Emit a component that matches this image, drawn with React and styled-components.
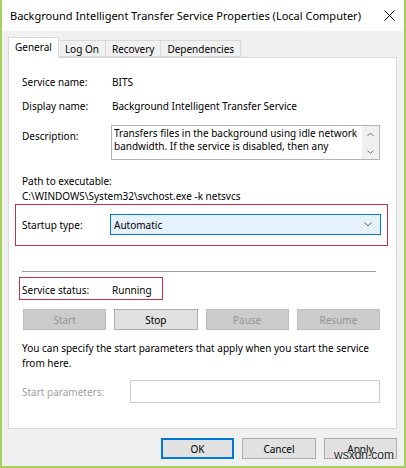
import React from 'react';
import styled, { createGlobalStyle } from 'styled-components';

const Global = createGlobalStyle`
  html, body { margin: 0; padding: 0; background: #fff; }
  body { font-family: "Noto Sans", "Liberation Sans", sans-serif; font-size: 10px; color: #000; }
  * { box-sizing: border-box; }
`;

const Window = styled.div`
  position: relative;
  width: 406px;
  height: 468px;
  background: #f0f0f0;
  border: 2px solid #a3d15c;
  border-top: 0;
  display: flex;
  flex-direction: column;
`;

const TitleBar = styled.div`
  height: 31px;
  background: #fff;
  display: flex;
  align-items: center;
  justify-content: space-between;
  padding: 0 9px 1px 8px;
  font-size: 11px;
`;

const Tabs = styled.div`
  display: flex;
  align-items: flex-end;
  margin: 6px 0 0 6px;
  position: relative;
  z-index: 1;
`;

const Tab = styled.div`
  height: ${(p) => (p.$active ? '21px' : '17px')};
  padding: 0 6px;
  display: flex;
  align-items: center;
  line-height: 16px;
  background: ${(p) => (p.$active ? '#fff' : '#f0f0f0')};
  border: 1px solid #d9d9d9;
  border-bottom: ${(p) => (p.$active ? '0' : '1px solid #d9d9d9')};
  border-left: ${(p) => (p.$first || p.$active ? '1px solid #d9d9d9' : '0')};
  margin-bottom: ${(p) => (p.$active ? '-1px' : '0')};
  padding-bottom: ${(p) => (p.$active ? '3px' : '0')};
`;

const Panel = styled.div`
  margin: 0 7px 0 6px;
  height: 372px;
  background: #fff;
  border: 1px solid #d9d9d9;
  padding: 16px 16px 0 13px;
`;

const Row = styled.div`
  display: grid;
  grid-template-columns: 90px 1fr;
  align-items: ${(p) => p.$align || 'center'};
  line-height: 16px;
  margin-top: ${(p) => p.$top || 0}px;
  color: ${(p) => (p.$muted ? '#a0a0a0' : '#000')};
`;

const Label = styled.div`
  white-space: nowrap;
  padding-top: ${(p) => p.$pad || 0}px;
`;

const DescBox = styled.div`
  position: relative;
  height: 35px;
  margin-left: -1px;
  border: 1px solid #b4b4b4;
  padding: 1px 20px 0 2px;
`;

const DescText = styled.div`
  line-height: 13px;
  height: 27px;
  overflow: hidden;
`;

const ScrollCol = styled.div`
  position: absolute;
  right: 0;
  top: 0;
  bottom: 0;
  width: 17px;
  background: #f0f0f0;
  display: flex;
  flex-direction: column;
  align-items: center;
  justify-content: space-between;
  padding: 6px 0 5px;
`;

const Text = styled.div`
  line-height: ${(p) => p.$lh || 16}px;
  margin-top: ${(p) => p.$top || 0}px;
  white-space: nowrap;
`;

const Highlight = styled.div`
  border: 1px solid #c4304a;
  margin: ${(p) => p.$margin};
  padding: ${(p) => p.$padding};
  width: ${(p) => p.$width || 'auto'};
`;

const Combo = styled.div`
  height: 21px;
  margin-left: -2px;
  border: 1px solid #0078d7;
  background: #e5f1fb;
  display: flex;
  align-items: center;
  justify-content: space-between;
  padding: 0 8px 0 3px;
`;

const Separator = styled.div`
  height: 1px;
  background: #a0a0a0;
  margin: 25px 4px 0 0;
`;

const ServiceButtons = styled.div`
  display: grid;
  grid-template-columns: repeat(4, 1fr);
  gap: 8px;
  margin: 9px 0 0 1px;
`;

const Button = styled.button`
  height: 21px;
  width: ${(p) => p.$width || 'auto'};
  font: inherit;
  padding: 0;
  background: ${(p) => (p.disabled ? '#cccccc' : '#e1e1e1')};
  color: ${(p) => (p.disabled ? '#959595' : '#000')};
  border: ${(p) => (p.$default ? '2px solid #0078d7' : p.disabled ? '1px solid #bfbfbf' : '1px solid #adadad')};
`;

const Input = styled.div`
  height: 23px;
  border: 1px solid #cccccc;
  margin-left: 18px;
`;

const Footer = styled.div`
  display: flex;
  justify-content: flex-end;
  gap: 8px;
  margin: 9px 7px 0 0;
`;

const Watermark = styled.div`
  position: absolute;
  right: 10px;
  bottom: 4px;
  font-family: "Liberation Sans", sans-serif;
  font-size: 12px;
  color: #222;
  text-shadow: 0 0 2px #fff, 0 0 2px #fff;
`;

const Chevron = ({ up, size = 8 }) => (
  <svg width={size} height={size / 2 + 1} viewBox="0 0 8 5">
    <path d={up ? 'M0.5 4.5 L4 1 L7.5 4.5' : 'M0.5 0.5 L4 4 L7.5 0.5'} fill="none" stroke="#606060" strokeWidth="1" />
  </svg>
);

const CloseIcon = () => (
  <svg width="11" height="11" viewBox="0 0 11 11">
    <path d="M0.5 0.5 L10.5 10.5 M10.5 0.5 L0.5 10.5" stroke="#000" strokeWidth="1" />
  </svg>
);

export default function App() {
  return (
    <>
      <Global />
      <Window>
        <TitleBar>
          <span>Background Intelligent Transfer Service Properties (Local Computer)</span>
          <CloseIcon />
        </TitleBar>
        <Tabs>
          <Tab $active $first>General</Tab>
          <Tab>Log On</Tab>
          <Tab>Recovery</Tab>
          <Tab>Dependencies</Tab>
        </Tabs>
        <Panel>
          <Row>
            <Label>Service name:</Label>
            <div>BITS</div>
          </Row>
          <Row $top={8}>
            <Label>Display name:</Label>
            <div>Background Intelligent Transfer Service</div>
          </Row>
          <Row $top={11} $align="start">
            <Label $pad={3}>Description:</Label>
            <DescBox>
              <DescText>
                Transfers files in the background using idle network bandwidth. If the service is disabled, then any
                applications that depend on BITS will fail.
              </DescText>
              <ScrollCol>
                <Chevron up size={7} />
                <Chevron size={7} />
              </ScrollCol>
            </DescBox>
          </Row>
          <Text $top={13}>Path to executable:</Text>
          <Text $top={-1}>C:\WINDOWS\System32\svchost.exe -k netsvcs</Text>
          <Highlight $margin="0 -8px 0 -7px" $padding="9px 6px 10px 6px">
            <Row>
              <Label>Startup type:</Label>
              <Combo>
                <span>Automatic</span>
                <Chevron />
              </Combo>
            </Row>
          </Highlight>
          <Separator />
          <Highlight $margin="5px 0 0 -3px" $padding="4px 0 1px 2px" $width="144px">
            <Row>
              <Label>Service status:</Label>
              <div>Running</div>
            </Row>
          </Highlight>
          <ServiceButtons>
            <Button disabled>Start</Button>
            <Button>Stop</Button>
            <Button disabled>Pause</Button>
            <Button disabled>Resume</Button>
          </ServiceButtons>
          <Text $top={11} $lh={15}>
            You can specify the start parameters that apply when you start the service
            <br />
            from here.
          </Text>
          <Row $top={9} $muted>
            <Label>Start parameters:</Label>
            <Input />
          </Row>
        </Panel>
        <Footer>
          <Button $default $width="73px">OK</Button>
          <Button $width="74px">Cancel</Button>
          <Button $width="73px">Apply</Button>
        </Footer>
        <Watermark>wsxdn.com</Watermark>
      </Window>
    </>
  );
}
